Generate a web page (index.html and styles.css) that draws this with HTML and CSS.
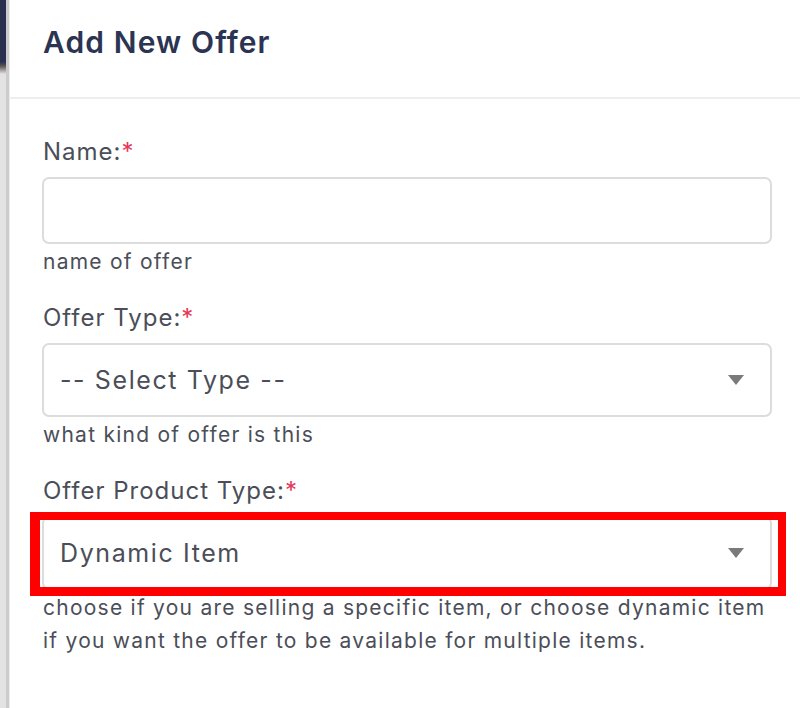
FILE: index.html
```html
<!DOCTYPE html>
<html>
<head>
<meta charset="utf-8">
<link rel="stylesheet" href="styles.css">
</head>
<body>
<div class="page">
  <div class="side"></div>
  <div class="panel">
    <div class="header"><h1 class="title">Add New Offer</h1></div>
    <div class="body">
      <div class="field">
        <div class="label">Name:<span class="req">*</span></div>
        <div class="input"></div>
        <div class="help">name of offer</div>
      </div>
      <div class="field">
        <div class="label">Offer Type:<span class="req">*</span></div>
        <div class="select"><span class="value">-- Select Type --</span><span class="arrow"></span></div>
        <div class="help">what kind of offer is this</div>
      </div>
      <div class="field">
        <div class="label">Offer Product Type:<span class="req">*</span></div>
        <div class="select highlighted"><span class="value">Dynamic Item</span><span class="arrow"></span></div>
        <div class="help">choose if you are selling a specific item, or choose dynamic item if you want the offer to be available for multiple items.</div>
      </div>
    </div>
  </div>
</div>
</body>
</html>
```
FILE: styles.css
```css
* { box-sizing: border-box; }
html, body { margin: 0; padding: 0; background: #fff; }
body { font-family: Inter, "Open Sans", sans-serif; color: #4b4e58; }
.page { display: flex; height: 708px; overflow: hidden; }
.side {
  width: 10px; flex: none;
  background:
    linear-gradient(to right, transparent 0 6px, #cccccc 6px 9px, #ececec 9px 10px),
    linear-gradient(to bottom, #2a3150 0 62px, #5c5458 66px, #e3e3e3 74px);
}
.panel { flex: 1; display: flex; flex-direction: column; }
.header { height: 99px; border-bottom: 2px solid #eeeeee; padding: 22px 0 0 33px; }
.title { margin: 0; font-size: 30px; font-weight: 600; color: #2b3452; line-height: 40px; letter-spacing: 1.1px; }
.body { padding: 37px 28px 0 32px; display: flex; flex-direction: column; gap: 24px; }
.field { display: flex; flex-direction: column; }
.label { font-size: 24px; line-height: 32px; margin-bottom: 9px; padding-left: 1px; letter-spacing: 1px; }
.req { color: #e63757; }
.input { height: 67px; border: 2px solid #dcdcdc; border-radius: 7px; }
.select {
  position: relative; height: 74px; border: 2px solid #dcdcdc; border-radius: 7px;
  display: flex; align-items: center; justify-content: space-between; padding: 0 26px 0 16px;
}
.value { font-size: 25px; letter-spacing: 1.6px; }
.arrow { width: 0; height: 0; border-left: 8px solid transparent; border-right: 8px solid transparent; border-top: 10px solid #7a7a7a; }
.highlighted::after {
  content: ""; position: absolute; left: -14px; top: -6px; right: -16px; bottom: -8px;
  border-style: solid; border-color: #ff0000;
  border-width: 8px 8px 9px 10px;
}
.help { font-size: 21px; line-height: 33px; margin-top: 1px; padding-left: 1px; letter-spacing: 1.25px; }
```
